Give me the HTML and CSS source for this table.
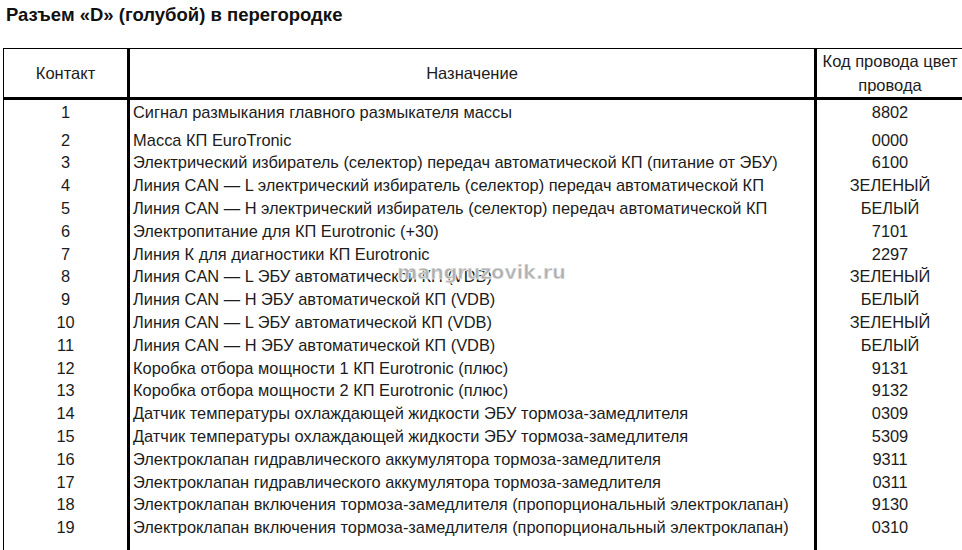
FILE: index.html
```html
<!DOCTYPE html>
<html lang="ru">
<head>
<meta charset="utf-8">
<title>Разъем «D»</title>
<link rel="stylesheet" href="styles.css">
</head>
<body>
<h1 class="title">Разъем «D» (голубой) в перегородке</h1>
<div class="table">
  <div class="row head">
    <div class="c1">Контакт</div>
    <div class="c2">Назначение</div>
    <div class="c3">Код провода цвет<br>провода</div>
  </div>
  <div class="row first"><div class="c1">1</div><div class="c2">Сигнал размыкания главного размыкателя массы</div><div class="c3">8802</div></div>
  <div class="row"><div class="c1">2</div><div class="c2">Масса КП EuroTronic</div><div class="c3">0000</div></div>
  <div class="row"><div class="c1">3</div><div class="c2">Электрический избиратель (селектор) передач автоматической КП (питание от ЭБУ)</div><div class="c3">6100</div></div>
  <div class="row"><div class="c1">4</div><div class="c2">Линия CAN — L электрический избиратель (селектор) передач автоматической КП</div><div class="c3">ЗЕЛЕНЫЙ</div></div>
  <div class="row"><div class="c1">5</div><div class="c2">Линия CAN — H электрический избиратель (селектор) передач автоматической КП</div><div class="c3">БЕЛЫЙ</div></div>
  <div class="row"><div class="c1">6</div><div class="c2">Электропитание для КП Eurotronic (+30)</div><div class="c3">7101</div></div>
  <div class="row"><div class="c1">7</div><div class="c2">Линия К для диагностики КП Eurotronic</div><div class="c3">2297</div></div>
  <div class="row"><div class="c1">8</div><div class="c2">Линия CAN — L ЭБУ автоматической КП (VDB)</div><div class="c3">ЗЕЛЕНЫЙ</div></div>
  <div class="row"><div class="c1">9</div><div class="c2">Линия CAN — H ЭБУ автоматической КП (VDB)</div><div class="c3">БЕЛЫЙ</div></div>
  <div class="row"><div class="c1">10</div><div class="c2">Линия CAN — L ЭБУ автоматической КП (VDB)</div><div class="c3">ЗЕЛЕНЫЙ</div></div>
  <div class="row"><div class="c1">11</div><div class="c2">Линия CAN — H ЭБУ автоматической КП (VDB)</div><div class="c3">БЕЛЫЙ</div></div>
  <div class="row"><div class="c1">12</div><div class="c2">Коробка отбора мощности 1 КП Eurotronic (плюс)</div><div class="c3">9131</div></div>
  <div class="row"><div class="c1">13</div><div class="c2">Коробка отбора мощности 2 КП Eurotronic (плюс)</div><div class="c3">9132</div></div>
  <div class="row"><div class="c1">14</div><div class="c2">Датчик температуры охлаждающей жидкости ЭБУ тормоза-замедлителя</div><div class="c3">0309</div></div>
  <div class="row"><div class="c1">15</div><div class="c2">Датчик температуры охлаждающей жидкости ЭБУ тормоза-замедлителя</div><div class="c3">5309</div></div>
  <div class="row"><div class="c1">16</div><div class="c2">Электроклапан гидравлического аккумулятора тормоза-замедлителя</div><div class="c3">9311</div></div>
  <div class="row"><div class="c1">17</div><div class="c2">Электроклапан гидравлического аккумулятора тормоза-замедлителя</div><div class="c3">0311</div></div>
  <div class="row"><div class="c1">18</div><div class="c2">Электроклапан включения тормоза-замедлителя (пропорциональный электроклапан)</div><div class="c3">9130</div></div>
  <div class="row"><div class="c1">19</div><div class="c2">Электроклапан включения тормоза-замедлителя (пропорциональный электроклапан)</div><div class="c3">0310</div></div>
  <div class="row tail"><div class="c1"></div><div class="c2"></div><div class="c3"></div></div>
</div>
<div class="watermark">mangruzovik.ru</div>
</body>
</html>
```

FILE: styles.css
```css
html, body {
  margin: 0;
  padding: 0;
  overflow: hidden;
  background: #ffffff;
}
body {
  width: 962px;
  height: 550px;
  position: relative;
  font-family: "Liberation Sans", Arial, sans-serif;
  color: #1c1c1c;
}
.title {
  margin: 0;
  padding: 5px 0 0 6px;
  height: 48px;
  box-sizing: border-box;
  font-size: 18.5px;
  font-weight: bold;
  color: #111;
  line-height: 20px;
}
.table {
  margin-left: 3px;
  width: 961px;
  border-left: 1px solid #000;
  border-right: 1px solid #000;
  border-top: 1px solid #000;
  box-sizing: border-box;
}
.row {
  display: grid;
  grid-template-columns: 126px 687px 1fr;
  font-size: 16.4px;
  line-height: 22.8px;
  height: 22.8px;
}
.row .c1 {
  border-right: 3px solid #000;
  text-align: center;
}
.row .c2 {
  border-right: 3px solid #000;
  padding-left: 3px;
  white-space: nowrap;
}
.row .c3 {
  text-align: center;
}
.row.head {
  height: 51px;
  line-height: 24px;
  font-size: 16.5px;
}
.row.head > div {
  border-bottom: 3px solid #000;
  display: flex;
  align-items: center;
  justify-content: center;
}
.row.head .c2 {
  padding-left: 0;
}
.row.first {
  height: 28.6px;
}
.row.first > div {
  padding-top: 1px;
}
.row.tail {
  height: 11px;
}
.watermark {
  position: absolute;
  left: 397px;
  top: 261px;
  font-family: "DejaVu Sans", sans-serif;
  font-weight: bold;
  font-size: 19.5px;
  color: rgba(150, 150, 150, 0.75);
  -webkit-text-stroke: 1px rgba(255, 255, 255, 0.6);
  text-shadow: 0 0 1px #fff;
  letter-spacing: -0.3px;
}
```
